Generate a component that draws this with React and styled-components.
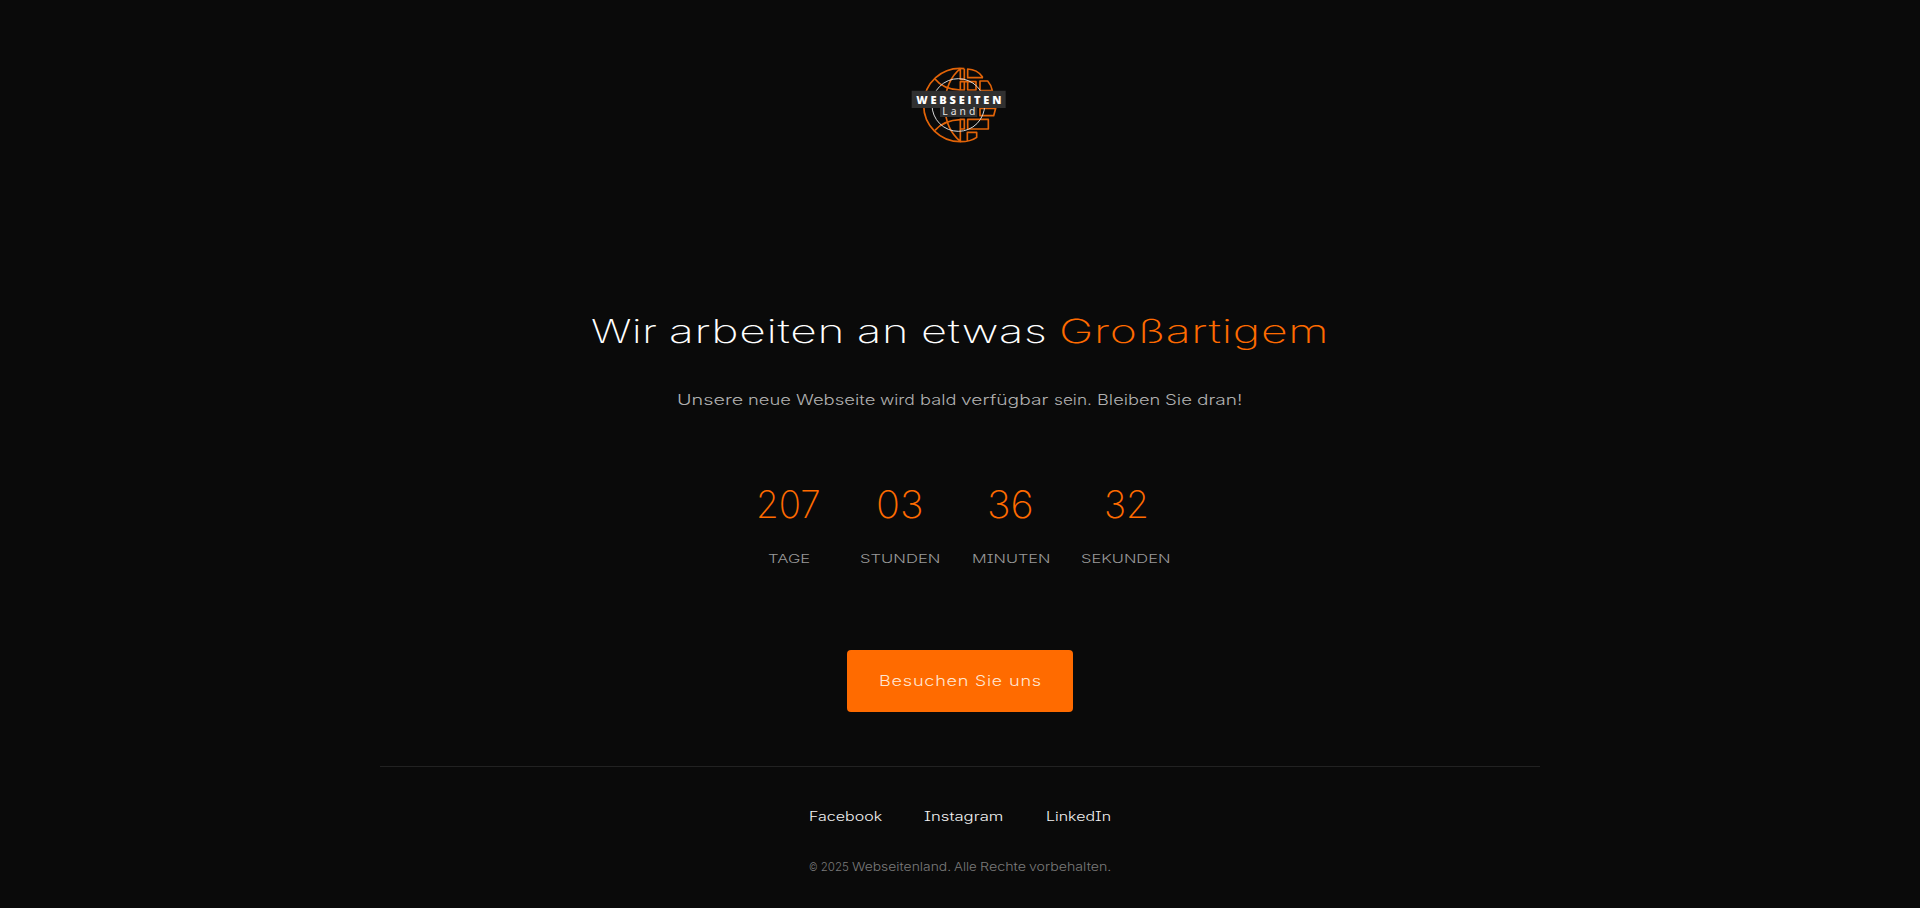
import React, { useLayoutEffect, useRef, useState } from "react";
import styled, { createGlobalStyle } from "styled-components";

const GlobalStyle = createGlobalStyle`
  * { box-sizing: border-box; }
  body {
    margin: 0;
    min-height: 908px;
    overflow: hidden;
    background: #0a0a0a;
    color: #fff;
    font-family: Inter, "Liberation Sans", sans-serif;
    font-weight: 200;
    font-feature-settings: "cv08";
  }
`;

const Page = styled.div`
  display: flex;
  flex-direction: column;
  align-items: center;
  height: 908px;
`;

const Header = styled.header`
  padding: 55px 0 0;
  height: 300px;
`;

const Logo = styled.svg`
  display: block;
  width: 120px;
  height: 100px;
`;

const FitBox = styled.span`
  display: inline-block;
  flex: none;
  width: ${(p) => p.$width}px;
  white-space: nowrap;
  text-align: left;
`;

const FitInner = styled.span`
  display: inline-block;
  transform-origin: 0 50%;
`;

/* Widens its text so that it fills exactly the given width. */
function Fit({ width, children }) {
  const ref = useRef(null);
  const [scale, setScale] = useState(1);
  useLayoutEffect(() => {
    const measure = () => {
      if (ref.current) setScale(width / ref.current.offsetWidth);
    };
    measure();
    document.fonts?.ready.then(measure);
  }, [width, children]);
  return (
    <FitBox $width={width}>
      <FitInner ref={ref} style={{ transform: `scaleX(${scale})` }}>
        {children}
      </FitInner>
    </FitBox>
  );
}

function Words({ items }) {
  return items.map(([word, width]) => (
    <Fit key={word} width={width}>{word}</Fit>
  ));
}

const Title = styled.h1`
  display: flex;
  gap: 12px;
  margin: 0;
  height: 62px;
  line-height: 62px;
  font-size: 33px;
  font-weight: 250;
  letter-spacing: 0.5px;
`;

const Accent = styled.span`
  font-weight: 200;
  color: #ff6b00;
`;

const Subtitle = styled.p`
  display: flex;
  gap: 5px;
  margin: 23px 0 0;
  height: 30px;
  line-height: 30px;
  font-size: 14.5px;
  font-weight: 300;
  color: #b0b0b0;
`;

const Countdown = styled.section`
  display: flex;
  gap: 32px;
  margin: 59px 0 0;
`;

const Unit = styled.div`
  display: flex;
  flex-direction: column;
  align-items: center;
  width: ${(p) => p.$width}px;
`;

const Value = styled.div`
  height: 60px;
  line-height: 61px;
  font-size: 38px;
  font-weight: 250;
  color: #ff6b00;
`;

const Label = styled.div`
  margin-top: 15px;
  height: 20px;
  line-height: 20px;
  font-size: 11.5px;
  font-weight: 300;
  color: #999;
`;

const Button = styled.a`
  display: flex;
  align-items: center;
  justify-content: center;
  gap: 6px;
  width: 226px;
  height: 62px;
  margin-top: 81px;
  padding-bottom: 1px;
  border-radius: 4px;
  background: #ff6b00;
  font-size: 14.5px;
  font-weight: 300;
  letter-spacing: 0.6px;
  color: #ffe6d2;
`;

const Footer = styled.footer`
  display: flex;
  flex-direction: column;
  align-items: center;
  width: 1160px;
  margin-top: 54px;
  border-top: 1px solid #222;
`;

const Links = styled.nav`
  display: flex;
  gap: 42px;
  margin-top: 39px;
  height: 22px;
  line-height: 22px;
  font-size: 12.5px;
  font-weight: 300;
  color: #f2f2f2;
`;

const Copyright = styled.p`
  display: flex;
  gap: 3px;
  margin: 28px 0 0;
  height: 22px;
  line-height: 22px;
  font-size: 11.5px;
  font-weight: 300;
  color: #7a7a7a;
`;

const titleWords = [["Wir", 66], ["arbeiten", 176], ["an", 52], ["etwas", 126]];
const subtitleWords = [
  ["Unsere", 65.5], ["neue", 43], ["Webseite", 79], ["wird", 35], ["bald", 36.5],
  ["verfügbar", 87.5], ["sein.", 38], ["Bleiben", 63], ["Sie", 27], ["dran!", 46],
];
const buttonWords = [["Besuchen", 90], ["Sie", 28], ["uns", 32.5]];
const copyrightWords = [
  ["©", 9], ["2025", 28], ["Webseitenland.", 99], ["Alle", 23], ["Rechte", 46],
  ["vorbehalten.", 82.5],
];
const units = [
  ["207", 65, "TAGE", 42, 79],
  ["03", 48, "STUNDEN", 81, 80],
  ["36", 47, "MINUTEN", 78, 77],
  ["32", 45, "SEKUNDEN", 90, 90],
];

function Brand() {
  return (
    <Logo viewBox="0 0 360 300" aria-label="Webseiten Land">
      <g fill="none" stroke="#e26408" strokeWidth="5" strokeLinejoin="round">
        <path d="M193 41C126 34 71 84 71 150C71 212 121 260 181 260C203 260 219 255 230 247V232H202V257" />
        <path d="M181 41V73H193V41M181 41C153 64 136 100 134 150C136 205 153 235 181 259V193H193V222H181" />
        <path d="M181 80H193V105H181Z" />
        <path d="M203 42C222 43 237 51 247 65V68H203Z" />
        <path d="M193 80H228V105H203V80" />
        <path d="M240 78H263Q274 90 277 107H240Z" />
        <path d="M240 160H287L281 182H240Z" />
        <path d="M203 193H265V222H203Z" />
        <path d="M105 72C120 91 148 104 181 105M105 226C124 205 151 195 181 194" />
      </g>
      <circle cx="175" cy="150" r="79" fill="none" stroke="#d8d8d8" strokeWidth="3" />
      <path fill="#303030" d="M35 107H317V159H232V186H120V159H35Z" />
      <text x="49" y="146" fill="#fff" fontFamily="Open Sans, sans-serif" fontSize="33" fontWeight="800" textLength="255">WEBSEITEN</text>
      <text x="127" y="180" fill="#e4e4e4" fontFamily="Noto Sans, sans-serif" fontSize="31" fontWeight="400" textLength="99">Land</text>
    </Logo>
  );
}

export default function App() {
  return (
    <Page>
      <GlobalStyle />
      <Header><Brand /></Header>
      <Title>
        <Words items={titleWords} />
        <Accent><Fit width={271}>Großartigem</Fit></Accent>
      </Title>
      <Subtitle><Words items={subtitleWords} /></Subtitle>
      <Countdown>
        {units.map(([value, valueWidth, label, labelWidth, width]) => (
          <Unit key={label} $width={width}>
            <Value><Fit width={valueWidth}>{value}</Fit></Value>
            <Label><Fit width={labelWidth}>{label}</Fit></Label>
          </Unit>
        ))}
      </Countdown>
      <Button><Words items={buttonWords} /></Button>
      <Footer>
        <Links>
          <Fit width={73}>Facebook</Fit>
          <Fit width={80}>Instagram</Fit>
          <Fit width={65}>LinkedIn</Fit>
        </Links>
        <Copyright><Words items={copyrightWords} /></Copyright>
      </Footer>
    </Page>
  );
}
